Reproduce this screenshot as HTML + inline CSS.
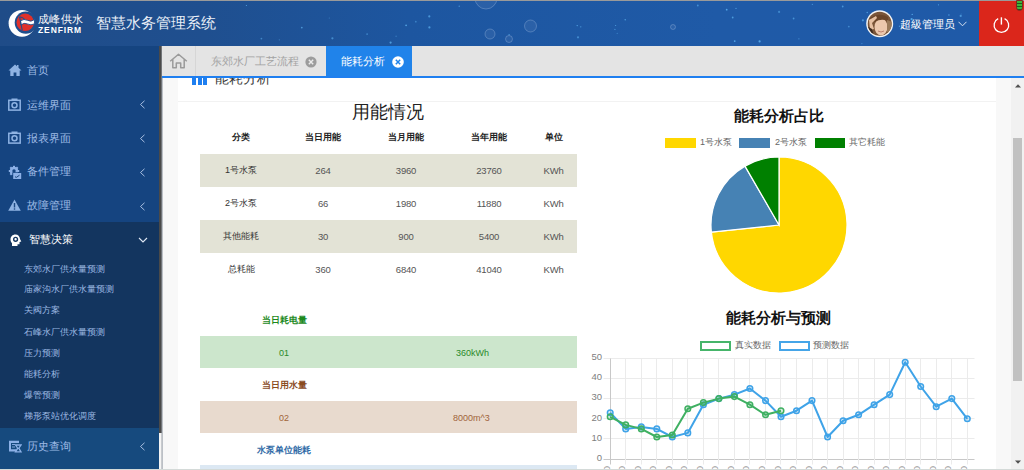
<!DOCTYPE html>
<html><head><meta charset="utf-8">
<style>
*{margin:0;padding:0;box-sizing:border-box}
html,body{width:1024px;height:470px;overflow:hidden;background:#f8f8f8;font-family:"Liberation Sans",sans-serif}
.abs{position:absolute}
#topline{left:0;top:0;width:1024px;height:1px;background:#9a9a9a}
#header{left:0;top:1px;width:1024px;height:45px;background:linear-gradient(90deg,#1f4c88 0,#1f4f8f 20%,#1d56a0 40%,#1f5aa7 70%,#1f5aa8 100%)}
#sidebar{left:0;top:46px;width:159px;height:424px;background:#154480}
#sbedge{left:159px;top:46px;width:4px;height:387px;background:linear-gradient(90deg,#4a4a4a 0,#4a4a4a 50%,#9aa0a8 75%,#dde0e4 100%)}
#tabbar{left:162px;top:46px;width:862px;height:30px;background:#e4e4e4}
#tabline{left:162px;top:76px;width:862px;height:2px;background:#1f7ff0}
#content{left:162px;top:78px;width:849px;height:392px;background:#f7f7f7;overflow:hidden}
#panel{left:178px;top:78px;width:818px;height:392px;background:#fff}
#scroll{left:1011px;top:78px;width:13px;height:392px;background:#f1f1f1}
#thumb{left:1013px;top:138px;width:9px;height:243px;background:#c1c1c1}
.t{position:absolute;white-space:nowrap;line-height:1}
.tbl .row{height:33px;display:flex;align-items:center}
.tbl span{display:block;text-align:center;font-size:9px;color:#333}
.tbl span.n{font-size:9.5px;letter-spacing:-0.2px;color:#555}
.tbl .hd span{font-weight:bold;color:#222}
.sub{left:24px;font-size:9px;color:#9cb8e2}
</style></head><body>
<div class="abs" id="topline"></div>
<div class="abs" id="header"></div>
<svg class="abs" style="left:0;top:1px" width="1024" height="45" viewBox="0 1 1024 45"><circle cx="406.1" cy="25.3" r="0.9" fill="#62b8f5" opacity="0.76"/><circle cx="580.8" cy="26.8" r="0.6" fill="#62b8f5" opacity="0.76"/><circle cx="577.2" cy="25.6" r="0.7" fill="#62b8f5" opacity="0.80"/><circle cx="578.0" cy="37.3" r="1.1" fill="#62b8f5" opacity="0.53"/><circle cx="867.2" cy="12.5" r="0.7" fill="#62b8f5" opacity="0.74"/><circle cx="617.2" cy="33.4" r="0.6" fill="#62b8f5" opacity="0.42"/><circle cx="938.5" cy="4.8" r="0.6" fill="#62b8f5" opacity="0.72"/><circle cx="429.4" cy="27.4" r="1.1" fill="#62b8f5" opacity="0.67"/><circle cx="911.6" cy="19.2" r="1.1" fill="#62b8f5" opacity="0.78"/><circle cx="329.3" cy="18.0" r="0.6" fill="#62b8f5" opacity="0.41"/><circle cx="390.6" cy="42.6" r="1.1" fill="#62b8f5" opacity="0.70"/><circle cx="862.9" cy="20.3" r="1.1" fill="#62b8f5" opacity="0.61"/><circle cx="625.2" cy="19.7" r="0.7" fill="#62b8f5" opacity="0.76"/><circle cx="734.7" cy="41.1" r="0.9" fill="#62b8f5" opacity="0.80"/><circle cx="726.7" cy="9.7" r="0.9" fill="#62b8f5" opacity="0.78"/><circle cx="899.5" cy="26.3" r="0.7" fill="#62b8f5" opacity="0.63"/><circle cx="961.2" cy="14.0" r="0.6" fill="#62b8f5" opacity="0.38"/><circle cx="861.9" cy="43.6" r="0.6" fill="#62b8f5" opacity="0.50"/><circle cx="279.3" cy="39.8" r="0.6" fill="#62b8f5" opacity="0.48"/><circle cx="798.9" cy="38.8" r="0.6" fill="#62b8f5" opacity="0.62"/><circle cx="793.6" cy="18.5" r="0.9" fill="#62b8f5" opacity="0.60"/><circle cx="912.2" cy="14.4" r="0.7" fill="#62b8f5" opacity="0.80"/><circle cx="459.2" cy="6.2" r="0.6" fill="#62b8f5" opacity="0.78"/><circle cx="948.9" cy="15.0" r="0.9" fill="#62b8f5" opacity="0.42"/><circle cx="261.4" cy="38.6" r="0.9" fill="#62b8f5" opacity="0.51"/><circle cx="332.4" cy="38.3" r="1.1" fill="#62b8f5" opacity="0.56"/><circle cx="614.9" cy="29.4" r="0.6" fill="#62b8f5" opacity="0.63"/><circle cx="926.1" cy="23.8" r="1.1" fill="#62b8f5" opacity="0.64"/><circle cx="759.6" cy="41.4" r="1.1" fill="#62b8f5" opacity="0.79"/><circle cx="615.6" cy="25.5" r="0.6" fill="#62b8f5" opacity="0.70"/><circle cx="960.7" cy="15.9" r="1.1" fill="#62b8f5" opacity="0.63"/><circle cx="697.8" cy="5.5" r="0.9" fill="#62b8f5" opacity="0.56"/><circle cx="732.7" cy="17.5" r="0.9" fill="#62b8f5" opacity="0.68"/><circle cx="246.4" cy="5.5" r="0.6" fill="#62b8f5" opacity="0.78"/><circle cx="415.8" cy="21.7" r="0.9" fill="#62b8f5" opacity="0.43"/><circle cx="367.1" cy="34.1" r="0.9" fill="#62b8f5" opacity="0.49"/><circle cx="509.1" cy="34.7" r="0.6" fill="#62b8f5" opacity="0.79"/><circle cx="736.0" cy="8.4" r="0.7" fill="#62b8f5" opacity="0.64"/><circle cx="429.3" cy="16.4" r="1.1" fill="#62b8f5" opacity="0.64"/><circle cx="301.8" cy="27.6" r="0.9" fill="#62b8f5" opacity="0.65"/><circle cx="396.1" cy="36.2" r="0.7" fill="#62b8f5" opacity="0.39"/><circle cx="779.1" cy="11.9" r="1.1" fill="#62b8f5" opacity="0.47"/><circle cx="812.4" cy="4.4" r="0.7" fill="#62b8f5" opacity="0.49"/><circle cx="848.8" cy="26.6" r="0.9" fill="#62b8f5" opacity="0.50"/><circle cx="842.7" cy="6.5" r="0.9" fill="#62b8f5" opacity="0.62"/><circle cx="486" cy="-2" r="11" fill="rgba(255,255,255,0.06)" stroke="rgba(220,235,255,0.3)" stroke-width="0.8"/><circle cx="490" cy="34" r="5" fill="rgba(255,255,255,0.06)" stroke="rgba(220,235,255,0.3)" stroke-width="0.8"/><circle cx="530.5" cy="26" r="6" fill="rgba(255,255,255,0.06)" stroke="rgba(220,235,255,0.3)" stroke-width="0.8"/><circle cx="509" cy="39" r="3.5" fill="rgba(255,255,255,0.06)" stroke="rgba(220,235,255,0.3)" stroke-width="0.8"/><circle cx="673" cy="27" r="2.5" fill="rgba(255,255,255,0.06)" stroke="rgba(220,235,255,0.3)" stroke-width="0.8"/></svg>
<!-- header -->
<svg class="abs" style="left:0;top:0" width="90" height="46" viewBox="0 0 90 46">
  <circle cx="22" cy="23.3" r="13.4" fill="#fff"/>
  <circle cx="25.8" cy="22.6" r="11.1" fill="#1f4e8d"/>
  <circle cx="25.2" cy="22.3" r="8.7" fill="#e0312b"/>
  <path d="M20.5 20.8 Q24 18.3 27.5 20.3 T34.5 19.6 L34.5 23.8 Q31 25.8 27.5 24 T20.8 25 Z" fill="#fff" stroke="#1f4e8d" stroke-width="0.9"/>
  <path d="M19.6 16.8 Q22 17.2 24.5 18.8" stroke="#1f4e8d" stroke-width="1" fill="none"/>
  <path d="M19.6 16.8 L22.3 30.5" stroke="#1f4e8d" stroke-width="1.1" fill="none"/>
</svg>
<div class="t" style="left:38px;top:14px;font-size:11px;color:#fff;letter-spacing:0.3px">成峰供水</div>
<div class="t" style="left:38px;top:26px;font-size:8.5px;color:#fff;font-weight:bold;letter-spacing:0.9px">ZENFIRM</div>
<div class="t" style="left:96px;top:15px;font-size:15px;color:#e8eef7">智慧水务管理系统</div>
<svg class="abs" style="left:866px;top:9.5px" width="28" height="28" viewBox="0 0 28 28">
<defs><clipPath id="av"><circle cx="13.7" cy="13.7" r="12"/></clipPath></defs>
<circle cx="13.7" cy="13.7" r="13.5" fill="#f4f4f4"/>
<g clip-path="url(#av)">
<rect x="0" y="0" width="28" height="28" fill="#7a5538"/>
<ellipse cx="15" cy="17" rx="6.5" ry="8.5" fill="#ecc8ad"/>
<path d="M4 8 Q13 2 22 7 L22 11 Q15 8 9 12 Z" fill="#6a4529"/>
<path d="M3 10 L10 6 L11 8 L6 13 L8 19 L4 20 Z" fill="#e6c0a2"/>
<path d="M1 16 L6 19 L8 26 L1 27 Z" fill="#3e2a1e"/>
<path d="M21 10 L26 12 L26 24 L21 22 Z" fill="#9a7a5a"/>
<path d="M12 21 Q15 23 18 21" stroke="#b07060" stroke-width="0.8" fill="none"/>
</g></svg>

<div class="t" style="left:900px;top:19px;font-size:11px;color:#fff">超級管理员</div>
<svg class="abs" style="left:958px;top:21px" width="9" height="6" viewBox="0 0 9 6"><path d="M0.5 0.8 L4.5 4.8 L8.5 0.8" stroke="#d8e2f0" stroke-width="1" fill="none"/></svg>
<div class="abs" style="left:979px;top:1px;width:45px;height:45px;background:#db261b"></div>
<svg class="abs" style="left:990px;top:14px" width="22" height="22" viewBox="0 0 22 22">
  <path d="M8.2 4.6 A7.3 7.3 0 1 0 14.6 4.6" stroke="#fff" stroke-width="1.3" fill="none"/>
  <path d="M11.4 3.3 L11.4 10.6" stroke="#fff" stroke-width="1.4"/>
</svg>
<div class="abs" style="left:1016px;top:0;width:7px;height:10.5px;border-radius:0 0 3.5px 3.5px;border:1px solid #7a2a20;background:repeating-linear-gradient(#3fb43a 0,#3fb43a 2px,#1d5a1e 2px,#1d5a1e 3px)"></div>

<div class="abs" id="sidebar"></div>
<!-- sidebar -->
<div class="abs" style="left:0;top:222px;width:159px;height:206px;background:#13355f"></div>
<div class="abs" style="left:0;top:428px;width:159px;height:42px;background:#164a7e"></div>

<svg class="abs" style="left:8px;top:64px" width="14" height="13" viewBox="0 0 14 13"><path d="M7 0.5 L0.5 6.5 L2.3 6.5 L2.3 12 L5.6 12 L5.6 8.5 L8.4 8.5 L8.4 12 L11.7 12 L11.7 6.5 L13.5 6.5 L10.5 3.7 L10.5 1 L9 1 L9 2.3 Z" fill="#8fb3e3"/></svg>
<div class="t" style="left:27px;top:65px;font-size:10.5px;color:#9fbbe6">首页</div>
<svg class="abs" style="left:8px;top:98px" width="13" height="13" viewBox="0 0 13 13"><rect x="0.8" y="2.3" width="11.4" height="9.8" fill="none" stroke="#8fb3e3" stroke-width="1.5"/><rect x="3.5" y="0.5" width="6" height="2.5" fill="#8fb3e3"/><circle cx="6.5" cy="7.2" r="2.5" fill="none" stroke="#8fb3e3" stroke-width="1.5"/></svg>
<div class="t" style="left:27px;top:99.5px;font-size:10.5px;color:#9fbbe6">运维界面</div>
<svg class="abs" style="left:139px;top:100px" width="7" height="9" viewBox="0 0 7 9"><path d="M5.5 0.8 L1.5 4.5 L5.5 8.2" stroke="#a9bfe0" stroke-width="1" fill="none"/></svg>
<svg class="abs" style="left:8px;top:131px" width="13" height="13" viewBox="0 0 13 13"><rect x="0.8" y="2.3" width="11.4" height="9.8" fill="none" stroke="#8fb3e3" stroke-width="1.5"/><rect x="3.5" y="0.5" width="6" height="2.5" fill="#8fb3e3"/><circle cx="6.5" cy="7.2" r="2.5" fill="none" stroke="#8fb3e3" stroke-width="1.5"/></svg>
<div class="t" style="left:27px;top:132.5px;font-size:10.5px;color:#9fbbe6">报表界面</div>
<svg class="abs" style="left:139px;top:134px" width="7" height="9" viewBox="0 0 7 9"><path d="M5.5 0.8 L1.5 4.5 L5.5 8.2" stroke="#a9bfe0" stroke-width="1" fill="none"/></svg>
<svg class="abs" style="left:7px;top:165px" width="16" height="15" viewBox="0 0 16 15"><g fill="#8cb0e6"><circle cx="7" cy="6" r="4.3"/><rect x="6" y="0.8" width="2" height="10.4"/><rect x="1.8" y="5" width="10.4" height="2"/><rect x="6" y="0.8" width="2" height="10.4" transform="rotate(45 7 6)"/><rect x="6" y="0.8" width="2" height="10.4" transform="rotate(-45 7 6)"/></g><circle cx="7" cy="6" r="1.7" fill="#154480"/><rect x="5.3" y="7.3" width="9.5" height="7" fill="#154480"/><rect x="6.2" y="8" width="8" height="6" fill="#8cb0e6"/><path d="M8 11.8 L9.5 12.3 L12.5 10.2" stroke="#1a457c" stroke-width="1" fill="none"/></svg>
<div class="t" style="left:27px;top:166px;font-size:10.5px;color:#9fbbe6">备件管理</div>
<svg class="abs" style="left:139px;top:168px" width="7" height="9" viewBox="0 0 7 9"><path d="M5.5 0.8 L1.5 4.5 L5.5 8.2" stroke="#a9bfe0" stroke-width="1" fill="none"/></svg>
<svg class="abs" style="left:8px;top:199px" width="13" height="13" viewBox="0 0 13 13"><path d="M6.5 0.5 L12.8 11.8 L0.2 11.8 Z" fill="#8fb3e3"/><rect x="5.8" y="4" width="1.4" height="4.5" fill="#1b4780"/><rect x="5.8" y="9.3" width="1.4" height="1.4" fill="#1b4780"/></svg>
<div class="t" style="left:27px;top:200px;font-size:10.5px;color:#9fbbe6">故障管理</div>
<svg class="abs" style="left:139px;top:202px" width="7" height="9" viewBox="0 0 7 9"><path d="M5.5 0.8 L1.5 4.5 L5.5 8.2" stroke="#a9bfe0" stroke-width="1" fill="none"/></svg>
<svg class="abs" style="left:9.5px;top:233.5px" width="12" height="13" viewBox="0 0 12 13"><path d="M5.5 0.5 C2.3 0.5 0.5 2.8 0.5 5.5 C0.5 7.3 1.3 8.3 2 9.2 L2 12 L7.5 12 L7.5 10.3 L9.5 10.3 L9.5 8 L11.3 7.5 L10 5 C9.8 2.5 8 0.5 5.5 0.5 Z" fill="#fff"/><circle cx="5.6" cy="5.3" r="1.9" fill="none" stroke="#13355f" stroke-width="1.4"/></svg>
<div class="t" style="left:29px;top:234px;font-size:10.7px;color:#fff;font-weight:500">智慧决策</div>
<svg class="abs" style="left:138px;top:237px" width="10" height="7" viewBox="0 0 10 7"><path d="M1 1 L5 5 L9 1" stroke="#dfe8f5" stroke-width="1.1" fill="none"/></svg>
<div class="t sub" style="top:264.5px">东郊水厂供水量预测</div>
<div class="t sub" style="top:285px">庙家沟水厂供水量预测</div>
<div class="t sub" style="top:306px">关阀方案</div>
<div class="t sub" style="top:327.5px">石峰水厂供水量预测</div>
<div class="t sub" style="top:348.5px">压力预测</div>
<div class="t sub" style="top:370px">能耗分析</div>
<div class="t sub" style="top:391px">爆管预测</div>
<div class="t sub" style="top:412px">梯形泵站优化调度</div>
<svg class="abs" style="left:8px;top:440px" width="14" height="13" viewBox="0 0 14 13"><path d="M1 0.8 H11 V3 H3 V9.3 H8 V11.5 H1 Z" fill="#8cb0e6"/><path d="M4 4.5 H7 M4 7 H7" stroke="#8cb0e6" stroke-width="0.9"/><path d="M7.5 5 H13 L10.8 8.2 L13 11.8 H7.5 L9.7 8.2 Z" fill="none" stroke="#8cb0e6" stroke-width="1.3"/></svg>
<div class="t" style="left:27px;top:441px;font-size:10.5px;color:#9fbbe6">历史查询</div>
<svg class="abs" style="left:139px;top:442px" width="7" height="9" viewBox="0 0 7 9"><path d="M5.5 0.8 L1.5 4.5 L5.5 8.2" stroke="#a9bfe0" stroke-width="1" fill="none"/></svg>

<div class="abs" id="sbedge"></div>
<div class="abs" style="left:159px;top:433px;width:4px;height:37px;background:linear-gradient(90deg,#f4f4f4 0,#f4f4f4 50%,#9aa0a8 75%,#dde0e4 100%)"></div>
<div class="abs" id="tabbar"></div>
<!-- tabs -->
<div class="abs" style="left:195px;top:46px;width:1px;height:30px;background:#d6d6d6"></div>
<svg class="abs" style="left:169px;top:53px" width="19" height="16" viewBox="0 0 19 16"><path d="M1.2 8.2 L9.5 1.2 L17.8 8.2 M3.8 6.3 V14.8 H7.3 V10 H11.7 V14.8 H15.2 V6.3" stroke="#9a9a9a" stroke-width="1.5" fill="none" stroke-linejoin="round"/></svg>
<div class="t" style="left:210.5px;top:56px;font-size:10.7px;color:#a3a3a3">东郊水厂工艺流程</div>
<svg class="abs" style="left:304.5px;top:55.5px" width="12" height="12" viewBox="0 0 12 12"><circle cx="6" cy="6" r="5.6" fill="#9c9c9c"/><path d="M3.8 3.8 L8.2 8.2 M8.2 3.8 L3.8 8.2" stroke="#ebebeb" stroke-width="1.4"/></svg>
<div class="abs" style="left:326px;top:46px;width:86px;height:30px;background:#2083ea"></div>
<div class="t" style="left:340.5px;top:56px;font-size:11px;color:#fff">能耗分析</div>
<svg class="abs" style="left:392px;top:55.5px" width="12" height="12" viewBox="0 0 12 12"><circle cx="6" cy="6" r="5.8" fill="#fff"/><path d="M3.8 3.8 L8.2 8.2 M8.2 3.8 L3.8 8.2" stroke="#2083ea" stroke-width="1.5"/></svg>

<div class="abs" id="tabline"></div>
<!-- content -->
<div class="abs" style="left:162px;top:78px;width:849px;height:392px;overflow:hidden">
 <div class="abs" style="left:16px;top:0;width:818px;height:400px;background:#fff"></div>
 <div class="abs" style="left:30px;top:-5px;width:4px;height:12px;background:#1f7ff0"></div>
 <div class="abs" style="left:35.5px;top:-5px;width:4px;height:12px;background:#1f7ff0"></div>
 <div class="abs" style="left:41px;top:-5px;width:4px;height:12px;background:#1f7ff0"></div>
 <div class="t" style="left:52.5px;top:-6.5px;font-size:13.5px;color:#3a3a3a">能耗分析</div>
 <div class="abs" style="left:16px;top:23px;width:818px;height:1px;background:#f2f2f2"></div>
</div>
<div class="t" style="left:352px;top:103px;font-size:18px;color:#222">用能情况</div>
<div class="abs" style="left:200px;top:154px;width:377px;height:33px;background:#e3e3d6"></div>
<div class="abs" style="left:200px;top:220px;width:377px;height:33px;background:#e3e3d6"></div>
<div class="abs tbl" style="left:200px;top:121px;width:377px">
 <div class="row hd"><span style="width:82px">分类</span><span style="width:82px">当日用能</span><span style="width:84px">当月用能</span><span style="width:82px">当年用能</span><span style="width:47px">单位</span></div>
 <div class="row"><span style="width:82px">1号水泵</span><span style="width:82px" class="n">264</span><span style="width:84px" class="n">3960</span><span style="width:82px" class="n">23760</span><span style="width:47px" class="n">KWh</span></div>
 <div class="row"><span style="width:82px">2号水泵</span><span style="width:82px" class="n">66</span><span style="width:84px" class="n">1980</span><span style="width:82px" class="n">11880</span><span style="width:47px" class="n">KWh</span></div>
 <div class="row"><span style="width:82px">其他能耗</span><span style="width:82px" class="n">30</span><span style="width:84px" class="n">900</span><span style="width:82px" class="n">5400</span><span style="width:47px" class="n">KWh</span></div>
 <div class="row"><span style="width:82px">总耗能</span><span style="width:82px" class="n">360</span><span style="width:84px" class="n">6840</span><span style="width:82px" class="n">41040</span><span style="width:47px" class="n">KWh</span></div>
</div>
<div class="t" style="left:262px;top:315.5px;font-size:9px;color:#1d8a1d;font-weight:bold">当日耗电量</div>
<div class="abs" style="left:200px;top:336px;width:377px;height:32px;background:#cce6cc"></div>
<div class="t" style="left:279px;top:348.5px;font-size:9px;color:#2a8a2a">01</div>
<div class="t" style="left:456px;top:348.5px;font-size:9px;color:#2a8a2a">360kWh</div>
<div class="t" style="left:262px;top:380.5px;font-size:9px;color:#8a4b1f;font-weight:bold">当日用水量</div>
<div class="abs" style="left:200px;top:401px;width:377px;height:32px;background:#e8dace"></div>
<div class="t" style="left:279px;top:413.5px;font-size:9px;color:#a0643a">02</div>
<div class="t" style="left:453px;top:413.5px;font-size:9px;color:#a0643a">8000m^3</div>
<div class="t" style="left:257px;top:445.5px;font-size:9px;color:#2f6aa6;font-weight:bold">水泵单位能耗</div>
<div class="abs" style="left:200px;top:465px;width:377px;height:10px;background:#dce8f3"></div>

<svg class="abs" style="left:0;top:0" width="1024" height="470" viewBox="0 0 1024 470">
<path d="M779 225 L779 157 A68 68 0 1 1 711.37 232.11 Z" fill="#ffd700" stroke="#fff" stroke-width="1.2"/>
<path d="M779 225 L711.37 232.11 A68 68 0 0 1 745.00 166.11 Z" fill="#4682b4" stroke="#fff" stroke-width="1.2"/>
<path d="M779 225 L745.00 166.11 A68 68 0 0 1 779 157 Z" fill="#008000" stroke="#fff" stroke-width="1.2"/>
<line x1="603.5" y1="459.5" x2="974.5" y2="459.5" stroke="#c8c8c8" stroke-width="1"/>
<text x="602" y="460.9" text-anchor="end" font-size="9.5" fill="#808080" font-family="Liberation Sans">0</text>
<line x1="603.5" y1="438.5" x2="974.5" y2="438.5" stroke="#ebebeb" stroke-width="1"/>
<text x="602" y="440.7" text-anchor="end" font-size="9.5" fill="#808080" font-family="Liberation Sans">10</text>
<line x1="603.5" y1="418.5" x2="974.5" y2="418.5" stroke="#ebebeb" stroke-width="1"/>
<text x="602" y="420.5" text-anchor="end" font-size="9.5" fill="#808080" font-family="Liberation Sans">20</text>
<line x1="603.5" y1="398.5" x2="974.5" y2="398.5" stroke="#ebebeb" stroke-width="1"/>
<text x="602" y="400.3" text-anchor="end" font-size="9.5" fill="#808080" font-family="Liberation Sans">30</text>
<line x1="603.5" y1="378.5" x2="974.5" y2="378.5" stroke="#ebebeb" stroke-width="1"/>
<text x="602" y="380.1" text-anchor="end" font-size="9.5" fill="#808080" font-family="Liberation Sans">40</text>
<line x1="603.5" y1="358.5" x2="974.5" y2="358.5" stroke="#ebebeb" stroke-width="1"/>
<text x="602" y="359.9" text-anchor="end" font-size="9.5" fill="#808080" font-family="Liberation Sans">50</text>
<line x1="610.5" y1="358.5" x2="610.5" y2="464.5" stroke="#c8c8c8" stroke-width="1"/>
<text transform="translate(609.7,466) rotate(-90)" text-anchor="end" font-size="9" fill="#999" font-family="Liberation Sans">0</text>
<line x1="625.5" y1="358.5" x2="625.5" y2="464.5" stroke="#ebebeb" stroke-width="1"/>
<text transform="translate(625.2,466) rotate(-90)" text-anchor="end" font-size="9" fill="#999" font-family="Liberation Sans">0</text>
<line x1="641.5" y1="358.5" x2="641.5" y2="464.5" stroke="#ebebeb" stroke-width="1"/>
<text transform="translate(640.8,466) rotate(-90)" text-anchor="end" font-size="9" fill="#999" font-family="Liberation Sans">0</text>
<line x1="656.5" y1="358.5" x2="656.5" y2="464.5" stroke="#ebebeb" stroke-width="1"/>
<text transform="translate(656.3,466) rotate(-90)" text-anchor="end" font-size="9" fill="#999" font-family="Liberation Sans">0</text>
<line x1="672.5" y1="358.5" x2="672.5" y2="464.5" stroke="#ebebeb" stroke-width="1"/>
<text transform="translate(671.8,466) rotate(-90)" text-anchor="end" font-size="9" fill="#999" font-family="Liberation Sans">0</text>
<line x1="687.5" y1="358.5" x2="687.5" y2="464.5" stroke="#ebebeb" stroke-width="1"/>
<text transform="translate(687.3,466) rotate(-90)" text-anchor="end" font-size="9" fill="#999" font-family="Liberation Sans">0</text>
<line x1="703.5" y1="358.5" x2="703.5" y2="464.5" stroke="#ebebeb" stroke-width="1"/>
<text transform="translate(702.9,466) rotate(-90)" text-anchor="end" font-size="9" fill="#999" font-family="Liberation Sans">0</text>
<line x1="718.5" y1="358.5" x2="718.5" y2="464.5" stroke="#ebebeb" stroke-width="1"/>
<text transform="translate(718.4,466) rotate(-90)" text-anchor="end" font-size="9" fill="#999" font-family="Liberation Sans">0</text>
<line x1="734.5" y1="358.5" x2="734.5" y2="464.5" stroke="#ebebeb" stroke-width="1"/>
<text transform="translate(733.9,466) rotate(-90)" text-anchor="end" font-size="9" fill="#999" font-family="Liberation Sans">0</text>
<line x1="749.5" y1="358.5" x2="749.5" y2="464.5" stroke="#ebebeb" stroke-width="1"/>
<text transform="translate(749.4,466) rotate(-90)" text-anchor="end" font-size="9" fill="#999" font-family="Liberation Sans">0</text>
<line x1="765.5" y1="358.5" x2="765.5" y2="464.5" stroke="#ebebeb" stroke-width="1"/>
<text transform="translate(765.0,466) rotate(-90)" text-anchor="end" font-size="9" fill="#999" font-family="Liberation Sans">0</text>
<line x1="780.5" y1="358.5" x2="780.5" y2="464.5" stroke="#ebebeb" stroke-width="1"/>
<text transform="translate(780.5,466) rotate(-90)" text-anchor="end" font-size="9" fill="#999" font-family="Liberation Sans">0</text>
<line x1="796.5" y1="358.5" x2="796.5" y2="464.5" stroke="#ebebeb" stroke-width="1"/>
<text transform="translate(796.0,466) rotate(-90)" text-anchor="end" font-size="9" fill="#999" font-family="Liberation Sans">0</text>
<line x1="812.5" y1="358.5" x2="812.5" y2="464.5" stroke="#ebebeb" stroke-width="1"/>
<text transform="translate(811.5,466) rotate(-90)" text-anchor="end" font-size="9" fill="#999" font-family="Liberation Sans">0</text>
<line x1="827.5" y1="358.5" x2="827.5" y2="464.5" stroke="#ebebeb" stroke-width="1"/>
<text transform="translate(827.1,466) rotate(-90)" text-anchor="end" font-size="9" fill="#999" font-family="Liberation Sans">0</text>
<line x1="843.5" y1="358.5" x2="843.5" y2="464.5" stroke="#ebebeb" stroke-width="1"/>
<text transform="translate(842.6,466) rotate(-90)" text-anchor="end" font-size="9" fill="#999" font-family="Liberation Sans">0</text>
<line x1="858.5" y1="358.5" x2="858.5" y2="464.5" stroke="#ebebeb" stroke-width="1"/>
<text transform="translate(858.1,466) rotate(-90)" text-anchor="end" font-size="9" fill="#999" font-family="Liberation Sans">0</text>
<line x1="874.5" y1="358.5" x2="874.5" y2="464.5" stroke="#ebebeb" stroke-width="1"/>
<text transform="translate(873.6,466) rotate(-90)" text-anchor="end" font-size="9" fill="#999" font-family="Liberation Sans">0</text>
<line x1="889.5" y1="358.5" x2="889.5" y2="464.5" stroke="#ebebeb" stroke-width="1"/>
<text transform="translate(889.2,466) rotate(-90)" text-anchor="end" font-size="9" fill="#999" font-family="Liberation Sans">0</text>
<line x1="905.5" y1="358.5" x2="905.5" y2="464.5" stroke="#ebebeb" stroke-width="1"/>
<text transform="translate(904.7,466) rotate(-90)" text-anchor="end" font-size="9" fill="#999" font-family="Liberation Sans">0</text>
<line x1="920.5" y1="358.5" x2="920.5" y2="464.5" stroke="#ebebeb" stroke-width="1"/>
<text transform="translate(920.2,466) rotate(-90)" text-anchor="end" font-size="9" fill="#999" font-family="Liberation Sans">0</text>
<line x1="936.5" y1="358.5" x2="936.5" y2="464.5" stroke="#ebebeb" stroke-width="1"/>
<text transform="translate(935.7,466) rotate(-90)" text-anchor="end" font-size="9" fill="#999" font-family="Liberation Sans">0</text>
<line x1="951.5" y1="358.5" x2="951.5" y2="464.5" stroke="#ebebeb" stroke-width="1"/>
<text transform="translate(951.3,466) rotate(-90)" text-anchor="end" font-size="9" fill="#999" font-family="Liberation Sans">0</text>
<line x1="967.5" y1="358.5" x2="967.5" y2="464.5" stroke="#ebebeb" stroke-width="1"/>
<text transform="translate(966.8,466) rotate(-90)" text-anchor="end" font-size="9" fill="#999" font-family="Liberation Sans">0</text>

<polyline points="610.2,412.7 625.7,428.9 641.3,426.9 656.8,428.9 672.3,437.0 687.8,432.9 703.4,404.7 718.9,398.6 734.4,394.6 749.9,388.5 765.5,400.6 781.0,416.8 796.5,410.7 812.0,400.6 827.6,437.0 843.1,420.8 858.6,414.8 874.1,404.7 889.7,394.6 905.2,362.2 920.7,386.5 936.2,406.7 951.8,398.6 967.3,418.8" fill="none" stroke="#3fa3e8" stroke-width="2" stroke-linejoin="round"/><circle cx="610.2" cy="412.7" r="2.8" fill="rgba(63,163,232,0.2)" stroke="#3fa3e8" stroke-width="1.5"/><circle cx="625.7" cy="428.9" r="2.8" fill="rgba(63,163,232,0.2)" stroke="#3fa3e8" stroke-width="1.5"/><circle cx="641.3" cy="426.9" r="2.8" fill="rgba(63,163,232,0.2)" stroke="#3fa3e8" stroke-width="1.5"/><circle cx="656.8" cy="428.9" r="2.8" fill="rgba(63,163,232,0.2)" stroke="#3fa3e8" stroke-width="1.5"/><circle cx="672.3" cy="437.0" r="2.8" fill="rgba(63,163,232,0.2)" stroke="#3fa3e8" stroke-width="1.5"/><circle cx="687.8" cy="432.9" r="2.8" fill="rgba(63,163,232,0.2)" stroke="#3fa3e8" stroke-width="1.5"/><circle cx="703.4" cy="404.7" r="2.8" fill="rgba(63,163,232,0.2)" stroke="#3fa3e8" stroke-width="1.5"/><circle cx="718.9" cy="398.6" r="2.8" fill="rgba(63,163,232,0.2)" stroke="#3fa3e8" stroke-width="1.5"/><circle cx="734.4" cy="394.6" r="2.8" fill="rgba(63,163,232,0.2)" stroke="#3fa3e8" stroke-width="1.5"/><circle cx="749.9" cy="388.5" r="2.8" fill="rgba(63,163,232,0.2)" stroke="#3fa3e8" stroke-width="1.5"/><circle cx="765.5" cy="400.6" r="2.8" fill="rgba(63,163,232,0.2)" stroke="#3fa3e8" stroke-width="1.5"/><circle cx="781.0" cy="416.8" r="2.8" fill="rgba(63,163,232,0.2)" stroke="#3fa3e8" stroke-width="1.5"/><circle cx="796.5" cy="410.7" r="2.8" fill="rgba(63,163,232,0.2)" stroke="#3fa3e8" stroke-width="1.5"/><circle cx="812.0" cy="400.6" r="2.8" fill="rgba(63,163,232,0.2)" stroke="#3fa3e8" stroke-width="1.5"/><circle cx="827.6" cy="437.0" r="2.8" fill="rgba(63,163,232,0.2)" stroke="#3fa3e8" stroke-width="1.5"/><circle cx="843.1" cy="420.8" r="2.8" fill="rgba(63,163,232,0.2)" stroke="#3fa3e8" stroke-width="1.5"/><circle cx="858.6" cy="414.8" r="2.8" fill="rgba(63,163,232,0.2)" stroke="#3fa3e8" stroke-width="1.5"/><circle cx="874.1" cy="404.7" r="2.8" fill="rgba(63,163,232,0.2)" stroke="#3fa3e8" stroke-width="1.5"/><circle cx="889.7" cy="394.6" r="2.8" fill="rgba(63,163,232,0.2)" stroke="#3fa3e8" stroke-width="1.5"/><circle cx="905.2" cy="362.2" r="2.8" fill="rgba(63,163,232,0.2)" stroke="#3fa3e8" stroke-width="1.5"/><circle cx="920.7" cy="386.5" r="2.8" fill="rgba(63,163,232,0.2)" stroke="#3fa3e8" stroke-width="1.5"/><circle cx="936.2" cy="406.7" r="2.8" fill="rgba(63,163,232,0.2)" stroke="#3fa3e8" stroke-width="1.5"/><circle cx="951.8" cy="398.6" r="2.8" fill="rgba(63,163,232,0.2)" stroke="#3fa3e8" stroke-width="1.5"/><circle cx="967.3" cy="418.8" r="2.8" fill="rgba(63,163,232,0.2)" stroke="#3fa3e8" stroke-width="1.5"/>
<polyline points="610.2,416.8 625.7,424.9 641.3,428.9 656.8,437.0 672.3,435.0 687.8,408.7 703.4,402.6 718.9,398.6 734.4,396.6 749.9,404.7 765.5,414.8 781.0,410.7" fill="none" stroke="#3fb062" stroke-width="2" stroke-linejoin="round"/><circle cx="610.2" cy="416.8" r="2.8" fill="rgba(63,176,98,0.2)" stroke="#3fb062" stroke-width="1.5"/><circle cx="625.7" cy="424.9" r="2.8" fill="rgba(63,176,98,0.2)" stroke="#3fb062" stroke-width="1.5"/><circle cx="641.3" cy="428.9" r="2.8" fill="rgba(63,176,98,0.2)" stroke="#3fb062" stroke-width="1.5"/><circle cx="656.8" cy="437.0" r="2.8" fill="rgba(63,176,98,0.2)" stroke="#3fb062" stroke-width="1.5"/><circle cx="672.3" cy="435.0" r="2.8" fill="rgba(63,176,98,0.2)" stroke="#3fb062" stroke-width="1.5"/><circle cx="687.8" cy="408.7" r="2.8" fill="rgba(63,176,98,0.2)" stroke="#3fb062" stroke-width="1.5"/><circle cx="703.4" cy="402.6" r="2.8" fill="rgba(63,176,98,0.2)" stroke="#3fb062" stroke-width="1.5"/><circle cx="718.9" cy="398.6" r="2.8" fill="rgba(63,176,98,0.2)" stroke="#3fb062" stroke-width="1.5"/><circle cx="734.4" cy="396.6" r="2.8" fill="rgba(63,176,98,0.2)" stroke="#3fb062" stroke-width="1.5"/><circle cx="749.9" cy="404.7" r="2.8" fill="rgba(63,176,98,0.2)" stroke="#3fb062" stroke-width="1.5"/><circle cx="765.5" cy="414.8" r="2.8" fill="rgba(63,176,98,0.2)" stroke="#3fb062" stroke-width="1.5"/><circle cx="781.0" cy="410.7" r="2.8" fill="rgba(63,176,98,0.2)" stroke="#3fb062" stroke-width="1.5"/>
</svg>
<div class="t" style="left:734px;top:108px;font-size:15px;color:#111;font-weight:bold">能耗分析占比</div>
<div class="abs" style="left:665px;top:138px;width:31px;height:10px;background:#ffd700"></div>
<div class="t" style="left:700px;top:137.5px;font-size:9px;color:#666">1号水泵</div>
<div class="abs" style="left:739px;top:138px;width:31px;height:10px;background:#4682b4"></div>
<div class="t" style="left:775px;top:137.5px;font-size:9px;color:#666">2号水泵</div>
<div class="abs" style="left:815px;top:138px;width:30px;height:10px;background:#008000"></div>
<div class="t" style="left:849px;top:137.5px;font-size:9px;color:#666">其它耗能</div>
<div class="t" style="left:726px;top:310px;font-size:15px;color:#111;font-weight:bold">能耗分析与预测</div>
<div class="abs" style="left:700px;top:340.5px;width:31px;height:10px;border:2px solid #46b56a;background:#fff"></div>
<div class="t" style="left:735px;top:340.5px;font-size:9px;color:#666">真实数据</div>
<div class="abs" style="left:778.5px;top:340.5px;width:31px;height:10px;border:2px solid #45a5e8;background:#fff"></div>
<div class="t" style="left:813px;top:340.5px;font-size:9px;color:#666">预测数据</div>

<div class="abs" id="scroll"></div>
<div class="abs" id="thumb"></div>
<svg class="abs" style="left:1014px;top:83px" width="8" height="6" viewBox="0 0 8 6"><path d="M1 4.5 L4 1.3 L7 4.5 Z" fill="#505050"/></svg>
<svg class="abs" style="left:1014px;top:459px" width="8" height="6" viewBox="0 0 8 6"><path d="M1 1.5 L4 4.7 L7 1.5 Z" fill="#505050"/></svg>
<div class="abs" style="left:0;top:469px;width:1024px;height:1px;background:#d4dad8"></div>
</body></html>
